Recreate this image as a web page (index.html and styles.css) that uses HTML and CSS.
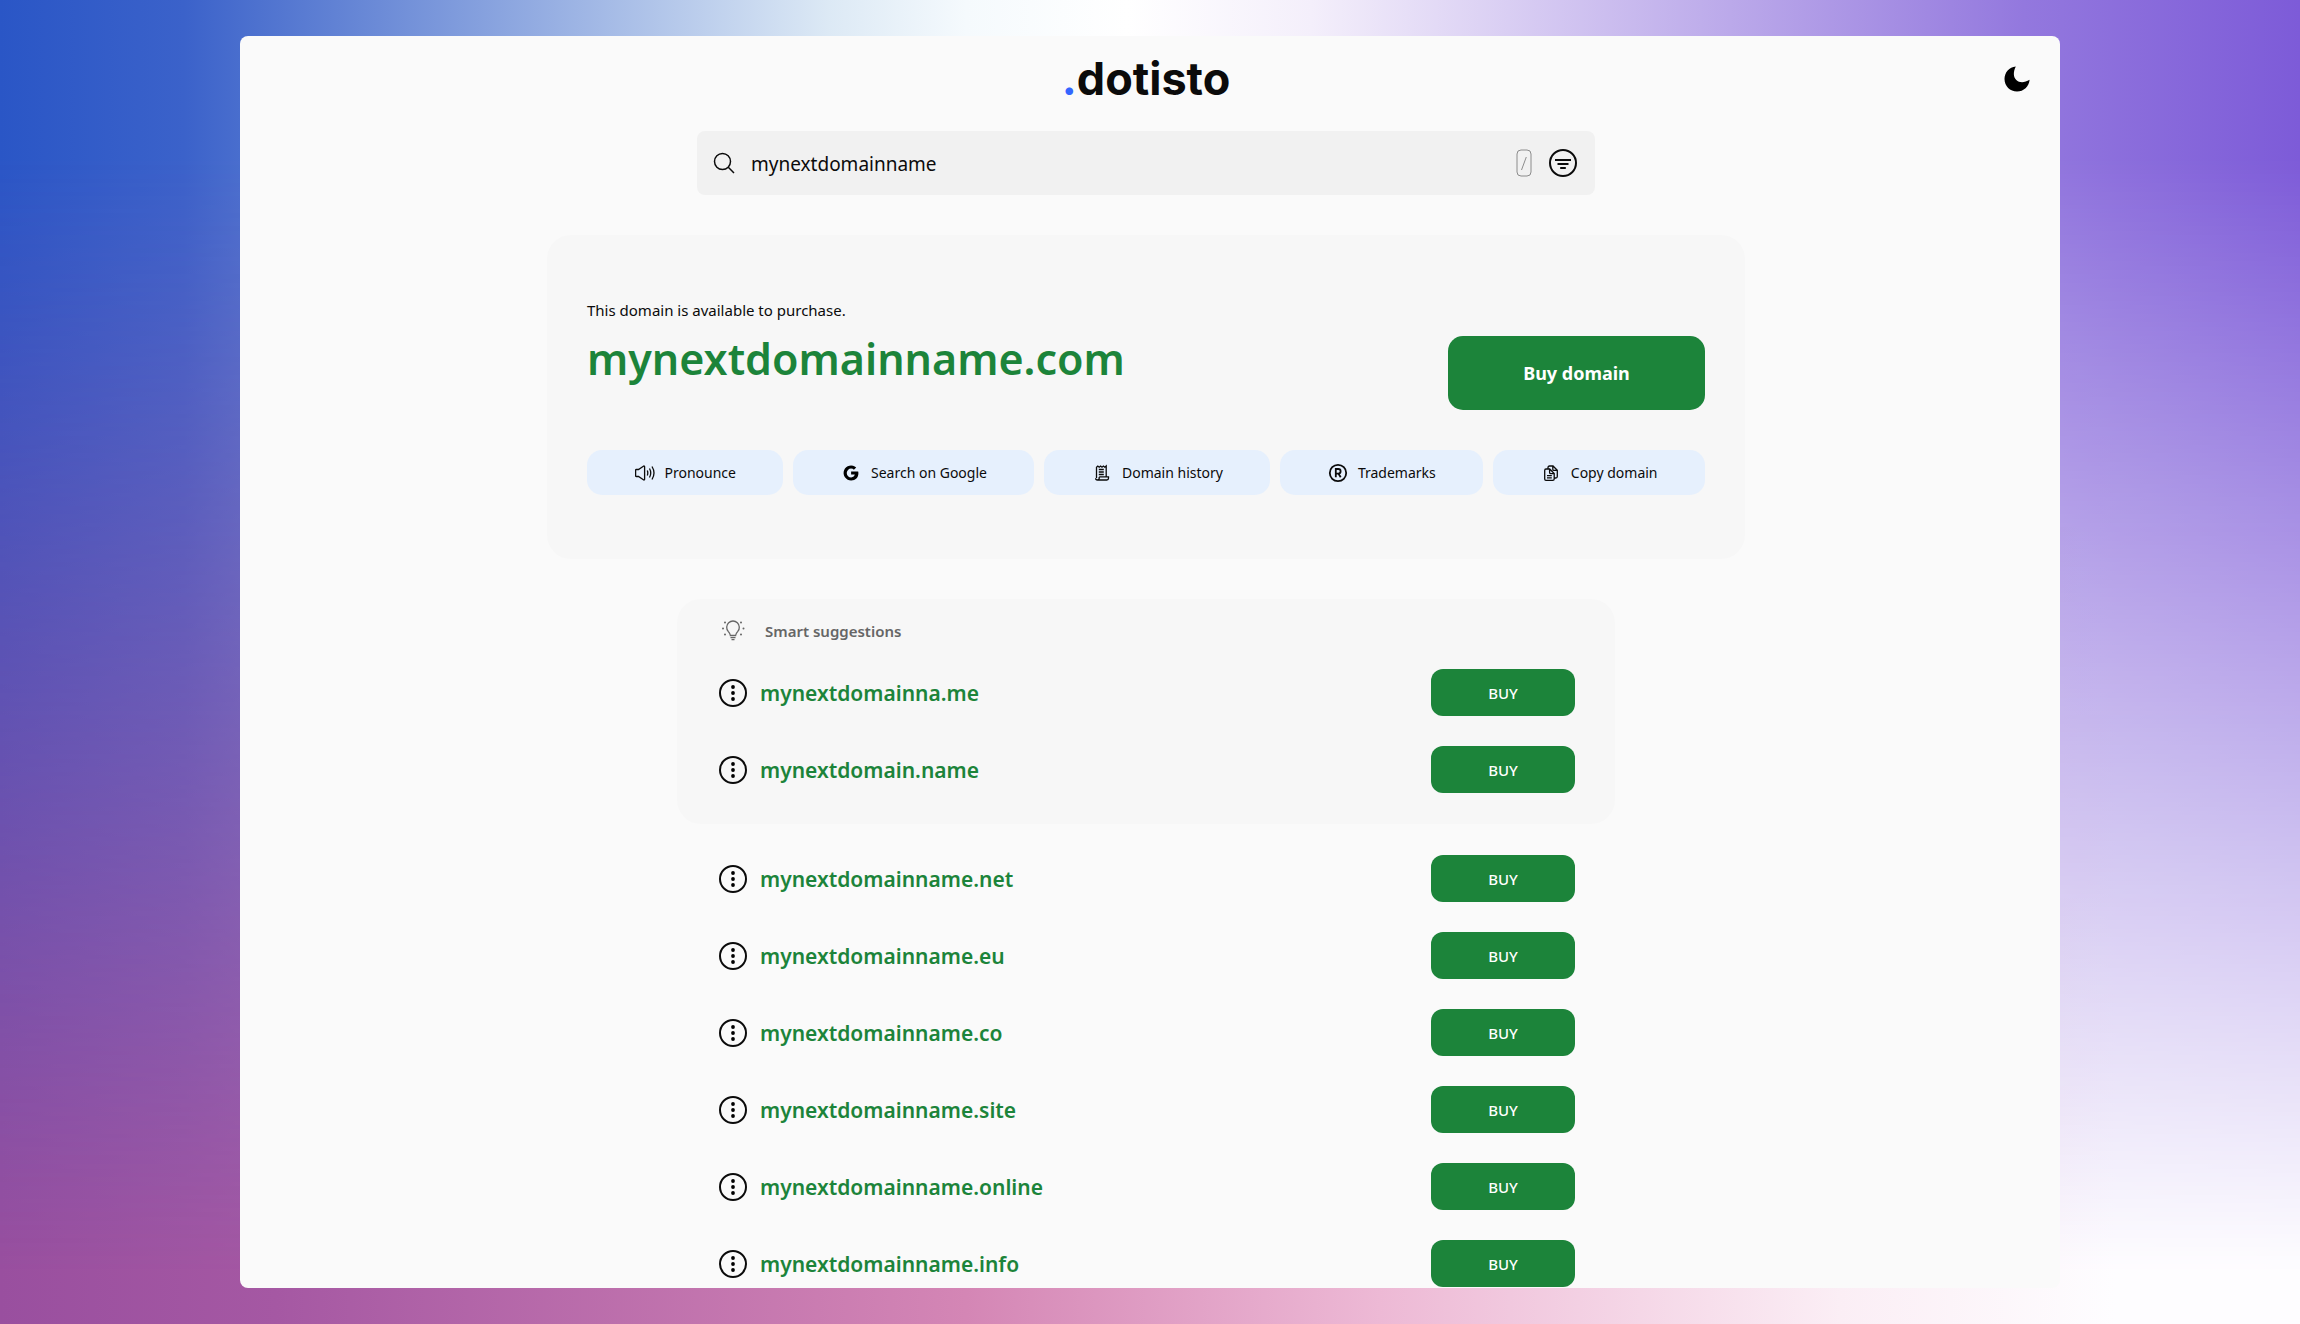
FILE: index.html
```html
<!DOCTYPE html>
<html lang="en">
<head>
    <meta charset="UTF-8">
    <meta name="viewport" content="width=device-width, initial-scale=1.0">
    <title>dotisto - mynextdomainname</title>
    <link rel="stylesheet" href="styles.css">
</head>
<body>
    <!-- Shared icons -->
    <svg class="sprite" aria-hidden="true">
        <symbol id="icon-more" viewBox="0 0 32 32">
            <circle cx="16" cy="16" r="13" fill="none" stroke="currentColor" stroke-width="2"/>
            <circle cx="16" cy="10" r="1.900"/>
            <circle cx="16" cy="16" r="1.900"/>
            <circle cx="16" cy="22" r="1.900"/>
        </symbol>
    </svg>

    <div class="window">
        <header class="header">
            <a class="logo" href="#"><span class="logo-dot">.</span>dotisto</a>
            <button class="icon-btn theme-btn" type="button" aria-label="Dark mode">
                <svg width="26" height="26" viewBox="0 0 26 26">
                    <path d="M11.800 .4C9 6 9.300 11 12.300 13.900C15.500 17 20.500 16.800 25.600 13.700C25 20.500 19.700 25.500 13 25.500C6 25.500 .5 20 .5 13C.5 6.200 5.200 1.200 11.800 .4z"/>
                </svg>
            </button>
        </header>

        <main class="content">
            <form class="search">
                <svg class="search-icon" width="22" height="22" viewBox="0 0 22 22">
                    <circle cx="9.500" cy="9.500" r="8"/>
                    <path d="M15.300 15.300L21 21"/>
                </svg>
                <input class="search-input" type="text" aria-label="Domain name" value="mynextdomainname">
                <svg class="key-hint" width="16" height="28" viewBox="0 0 16 28">
                    <rect x="1" y="1" width="14" height="26" rx="4"/>
                    <path d="M10.300 8L5.500 21"/>
                </svg>
                <button class="icon-btn" type="button" aria-label="Filters">
                    <svg class="filter-icon" width="28" height="28" viewBox="0 0 28 28">
                        <circle cx="14" cy="14" r="13"/>
                        <path d="M6 11h16M8.500 15h11M11.200 19h5.600"/>
                    </svg>
                </button>
            </form>

            <section class="hero">
                <div class="hero-top">
                    <div class="hero-text">
                        <p class="hero-status">This domain is available to purchase.</p>
                        <h1 class="hero-domain">mynextdomainname.com</h1>
                    </div>
                    <button class="buy-main" type="button">Buy domain</button>
                </div>
                <div class="actions">
                    <button class="action" type="button">
                        <svg class="line-icon" width="20" height="20" viewBox="0 0 20 20">
                            <path d="M1.300 6.500h2.200L8.400 3.200C9 2.800 9.600 3.100 9.600 3.800V16.200C9.600 16.900 9 17.200 8.400 16.800L3.500 13.500H1.300C.8 13.500 .6 13.200 .6 12.800V7.200C.6 6.800 .8 6.500 1.300 6.500zM12.300 7.500Q13.300 10 12.300 12.500M14.500 5.500Q17 10 14.500 14.500M17 3.500Q21 10 17 16.500"/>
                        </svg>
                        Pronounce
                    </button>
                    <button class="action" type="button">
                        <svg width="20" height="20" viewBox="0 0 20 20">
                            <path d="M10.100 8.600h7.100c.1.500.2 1.100.2 1.700 0 4.300-2.900 7.200-7.200 7.200A7.500 7.500 0 1 1 15.200 4.500L12.900 6.700C12.200 6 11.200 5.600 10.100 5.600A4.400 4.400 0 1 0 10.200 14.400C12.300 14.400 13.500 13.200 13.800 11.600H10.100z"/>
                        </svg>
                        Search on Google
                    </button>
                    <button class="action" type="button">
                        <svg class="line-icon" width="20" height="20" viewBox="0 0 20 20">
                            <path d="M4.500 15V4.200L5.800 3l1.400 1.200L8.600 3L10 4.200L11.400 3l1.400 1.200L14.200 3V13.800M6.800 6.500h5M6.800 9h5M6.800 11.500h5M7.200 13.900h9.300v1.400Q16.500 17 14.800 17H5.500Q3.600 17 3.600 15.200M7.200 13.900V15.400Q7.100 17 5.500 17"/>
                        </svg>
                        Domain history
                    </button>
                    <button class="action" type="button">
                        <svg class="mark-icon" width="20" height="20" viewBox="0 0 20 20">
                            <circle cx="10" cy="10" r="8.200"/>
                            <path d="M7.800 14.300V6h2.500a2.300 2.300 0 0 1 0 4.600H7.800M10.400 10.600L12.700 14.300"/>
                        </svg>
                        Trademarks
                    </button>
                    <button class="action" type="button">
                        <svg class="line-icon" width="20" height="20" viewBox="0 0 20 20">
                            <path d="M7 6V4.500Q7 3 8.500 3H12L16.300 7.200V13.500Q16.300 15 14.800 15H13.200M11.800 3.200V6.200Q11.800 7.400 13 7.400H16M5 6H8.700L13.200 10.500V16Q13.200 17.400 11.800 17.400H5Q3.700 17.400 3.700 16V7.400Q3.700 6 5 6zM8.600 6.200V9.400Q8.600 10.600 9.800 10.600H13M6 12.600h4.800M6 14.900h4.800"/>
                        </svg>
                        Copy domain
                    </button>
                </div>
            </section>

            <section class="results suggestions">
                <h2 class="suggestions-title">
                    <svg class="bulb-icon" width="32" height="32" viewBox="0 0 32 32">
                        <path d="M13.400 20.500Q13.200 18.500 11.200 16.400A6.300 6.300 0 1 1 20.800 16.400Q18.800 18.500 18.600 20.500zM13.500 22.700h5M14.500 24.600h3"/>
                        <path class="rays" d="M8 7.500v.1M24 7.500v.1M6 13.500v.1M26.500 13.500v.1M8 19.500v.1M24 19.500v.1"/>
                    </svg>
                    Smart suggestions
                </h2>
                <ul class="list">
                    <li class="row">
                        <button class="icon-btn" type="button" aria-label="More"><svg width="32" height="32"><use href="#icon-more"/></svg></button>
                        <a class="domain" href="#">mynextdomainna.me</a>
                        <button class="buy" type="button">BUY</button>
                    </li>
                    <li class="row">
                        <button class="icon-btn" type="button" aria-label="More"><svg width="32" height="32"><use href="#icon-more"/></svg></button>
                        <a class="domain" href="#">mynextdomain.name</a>
                        <button class="buy" type="button">BUY</button>
                    </li>
                </ul>
            </section>

            <section class="results">
                <ul class="list">
                    <li class="row">
                        <button class="icon-btn" type="button" aria-label="More"><svg width="32" height="32"><use href="#icon-more"/></svg></button>
                        <a class="domain" href="#">mynextdomainname.net</a>
                        <button class="buy" type="button">BUY</button>
                    </li>
                    <li class="row">
                        <button class="icon-btn" type="button" aria-label="More"><svg width="32" height="32"><use href="#icon-more"/></svg></button>
                        <a class="domain" href="#">mynextdomainname.eu</a>
                        <button class="buy" type="button">BUY</button>
                    </li>
                    <li class="row">
                        <button class="icon-btn" type="button" aria-label="More"><svg width="32" height="32"><use href="#icon-more"/></svg></button>
                        <a class="domain" href="#">mynextdomainname.co</a>
                        <button class="buy" type="button">BUY</button>
                    </li>
                    <li class="row">
                        <button class="icon-btn" type="button" aria-label="More"><svg width="32" height="32"><use href="#icon-more"/></svg></button>
                        <a class="domain" href="#">mynextdomainname.site</a>
                        <button class="buy" type="button">BUY</button>
                    </li>
                    <li class="row">
                        <button class="icon-btn" type="button" aria-label="More"><svg width="32" height="32"><use href="#icon-more"/></svg></button>
                        <a class="domain" href="#">mynextdomainname.online</a>
                        <button class="buy" type="button">BUY</button>
                    </li>
                    <li class="row">
                        <button class="icon-btn" type="button" aria-label="More"><svg width="32" height="32"><use href="#icon-more"/></svg></button>
                        <a class="domain" href="#">mynextdomainname.info</a>
                        <button class="buy" type="button">BUY</button>
                    </li>
                </ul>
            </section>
        </main>
    </div>
</body>
</html>
```
FILE: styles.css
```css
* {
    box-sizing: border-box;
}

body {
    margin: 0;
    height: 100vh;
    padding: 36px 240px;
    overflow: hidden;
    font-family: "Noto Sans", sans-serif;
    color: #0b0b0b;
    background: linear-gradient(to right, #994f9f 0%, #a558a3 12%, #d486b5 42%, #edb9d5 60%, #fbeef5 80%, #fefdff 92%);
}

/* top colours, faded out towards the bottom of the page */
body::before {
    content: "";
    position: absolute;
    inset: 0;
    background: linear-gradient(to right, #2a56c6 0%, #3b62ca 8%, #dce9f5 36%, #f5fafd 42%, #ffffff 49%, #f4effb 57%, #9378de 88%, #7d5bd8 100%);
    mask-image: linear-gradient(to bottom, #000 12%, transparent 96%);
}

button,
input {
    font-family: inherit;
    color: inherit;
}

button {
    border: none;
    padding: 0;
    cursor: pointer;
}

h1,
h2,
p,
ul {
    margin: 0;
    padding: 0;
}

.sprite {
    position: absolute;
    width: 0;
    height: 0;
}

.window {
    position: relative;
    height: 100%;
    overflow: hidden;
    border-radius: 8px;
    background-color: #fafafa;
}

.header {
    display: grid;
    grid-template-columns: 1fr auto 1fr;
    align-items: center;
    height: 86px;
    padding: 0 30px 0 22px;
}

.logo {
    grid-column: 2;
    font-family: Inter, sans-serif;
    font-size: 45px;
    line-height: 56px;
    font-weight: 700;
    color: #0b0b0b;
    text-decoration: none;
}

.logo-dot {
    color: #3366ff;
}

.icon-btn {
    display: flex;
    background: none;
}

.theme-btn {
    justify-self: end;
}

.content {
    display: flex;
    flex-direction: column;
    align-items: center;
    padding: 9px 8px 0 0;
}

.search {
    display: flex;
    align-items: center;
    width: 100%;
    max-width: 898px;
    height: 64px;
    padding: 0 18px 0 16px;
    border-radius: 8px;
    background-color: #f1f1f1;
}

.search-icon {
    fill: none;
    stroke: #0b0b0b;
    stroke-width: 1.5;
}

.search-input {
    flex: 1;
    margin-left: 16px;
    padding: 1px 0 0;
    border: none;
    outline: none;
    background: none;
    font-size: 19px;
}

.key-hint {
    margin-right: 17px;
    fill: none;
    stroke: #8c8c8c;
    stroke-width: 1;
}

.filter-icon {
    fill: none;
    stroke: #0b0b0b;
    stroke-width: 2;
}

.hero {
    width: 100%;
    max-width: 1198px;
    margin-top: 40px;
    padding: 63px 40px 64px;
    border-radius: 24px;
    background-color: #f7f7f7;
}

.hero-top {
    display: flex;
    align-items: flex-end;
    justify-content: space-between;
}

.hero-text {
    padding-bottom: 21px;
}

.hero-status {
    font-size: 15px;
    line-height: 24px;
}

.hero-domain {
    margin-top: 7px;
    font-size: 43px;
    line-height: 60px;
    font-weight: 600;
    color: #1c843a;
}

.buy-main {
    width: 257px;
    height: 74px;
    border-radius: 15px;
    background-color: #1c843a;
    color: #fff;
    font-size: 18px;
    font-weight: 700;
}

.actions {
    display: flex;
    gap: 10px;
    margin-top: 40px;
}

.action {
    display: flex;
    flex: 1 1 auto;
    align-items: center;
    justify-content: center;
    gap: 10px;
    height: 45px;
    border-radius: 15px;
    background-color: #e6f0fd;
    font-size: 14px;
    padding: 0 40px;
}

.line-icon,
.mark-icon,
.bulb-icon {
    fill: none;
    stroke: currentColor;
    stroke-width: 1.3;
}

.mark-icon {
    stroke-width: 1.8;
}

.results {
    width: 100%;
    max-width: 938px;
    padding: 31px 40px 0;
}

.suggestions {
    margin-top: 40px;
    padding: 16px 40px 31px;
    border-radius: 24px;
    background-color: #f7f7f7;
}

.suggestions-title {
    display: flex;
    align-items: center;
    gap: 16px;
    margin-bottom: 22px;
    font-size: 15px;
    line-height: 32px;
    font-weight: 600;
    color: #666;
}

.rays {
    stroke-width: 2;
    stroke-linecap: round;
}

.list {
    display: flex;
    flex-direction: column;
    gap: 30px;
    list-style: none;
}

.row {
    display: flex;
    align-items: center;
}

.domain {
    flex: 1;
    margin-left: 11px;
    font-size: 21px;
    line-height: 32px;
    font-weight: 600;
    color: #1c843a;
    text-decoration: none;
}

.buy {
    width: 144px;
    height: 47px;
    border-radius: 12px;
    background-color: #1c843a;
    color: #fff;
    font-size: 15px;
    font-weight: 500;
}
```
